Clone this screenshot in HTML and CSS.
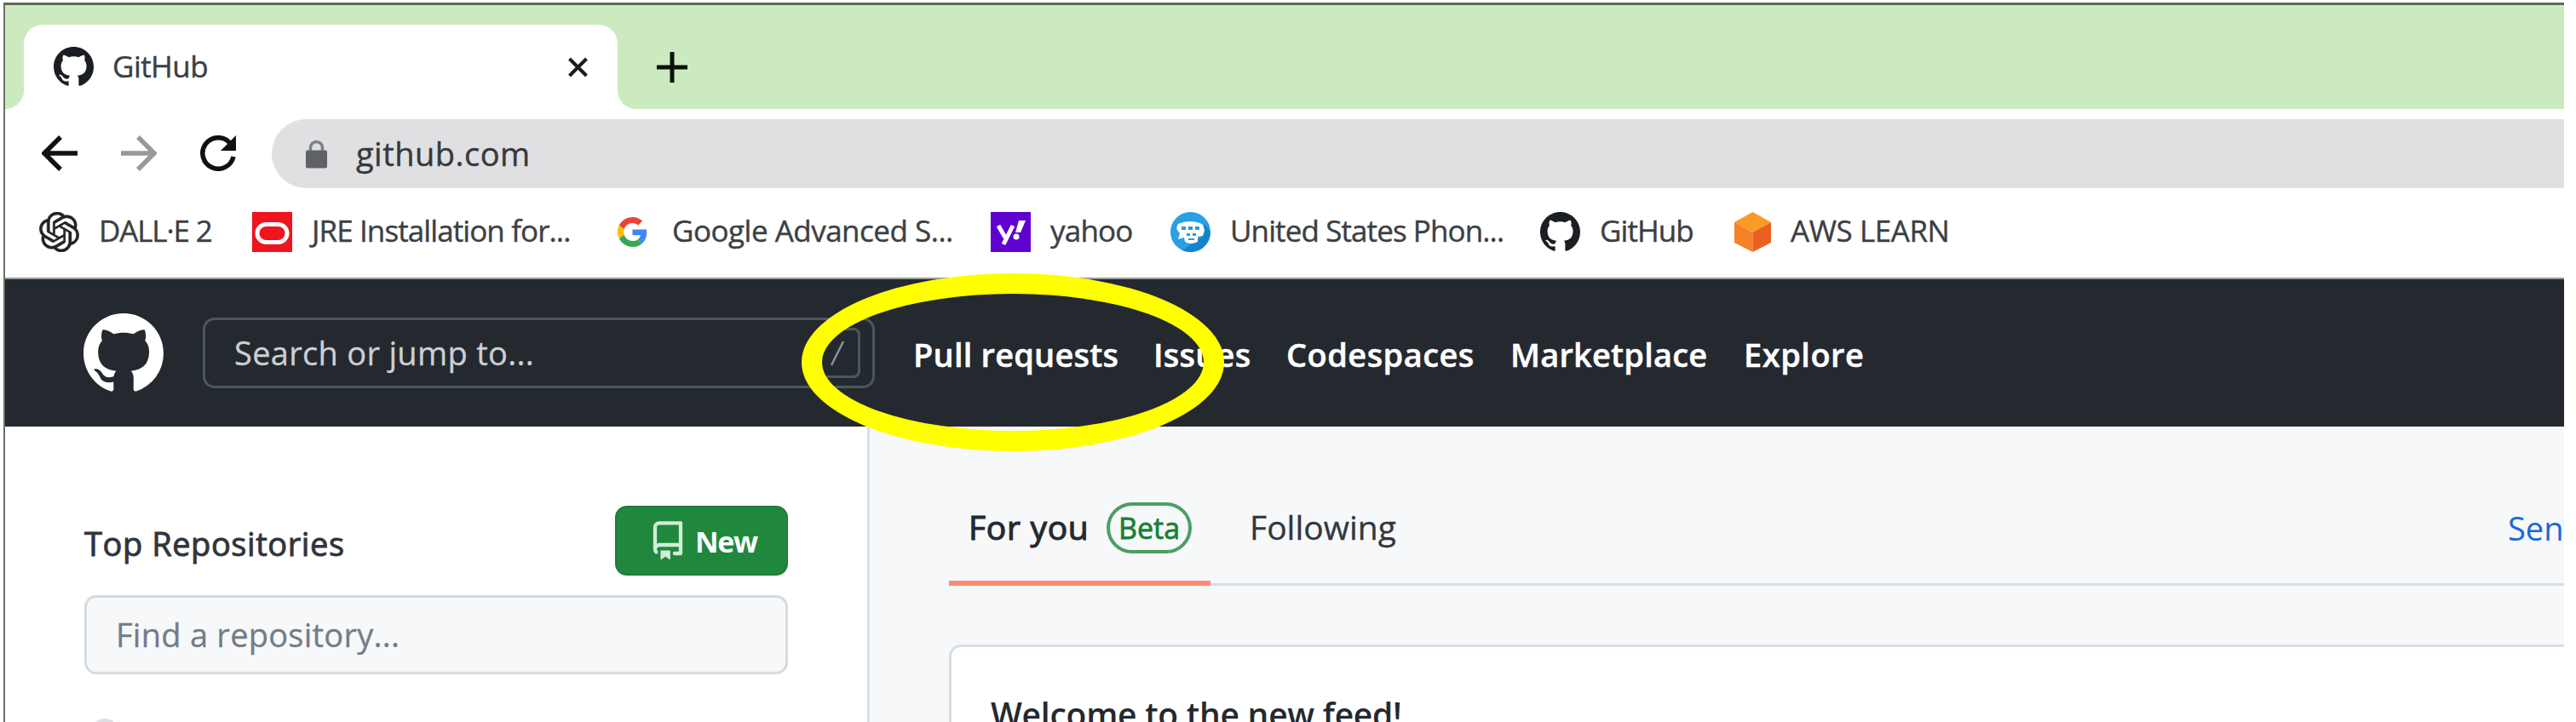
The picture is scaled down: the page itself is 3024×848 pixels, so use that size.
FILE: index.html
```html
<!DOCTYPE html>
<html lang="en">
<head>
<meta charset="utf-8">
<title>GitHub</title>
<link rel="stylesheet" href="styles.css">
</head>
<body>
<svg class="defs" width="0" height="0">
  <symbol id="mark" viewBox="0 0 16 16"><path d="M8 0C3.58 0 0 3.58 0 8c0 3.54 2.29 6.53 5.47 7.59.4.07.55-.17.55-.38 0-.19-.01-.82-.01-1.49-2.01.37-2.53-.49-2.69-.94-.09-.23-.48-.94-.82-1.13-.28-.15-.68-.52-.01-.53.63-.01 1.08.58 1.23.82.72 1.21 1.87.87 2.33.66.07-.52.28-.87.51-1.07-1.78-.2-3.64-.89-3.64-3.95 0-.87.31-1.59.82-2.15-.08-.2-.36-1.02.08-2.12 0 0 .67-.21 2.2.82.64-.18 1.32-.27 2-.27s1.36.09 2 .27c1.53-1.04 2.2-.82 2.2-.82.44 1.1.16 1.92.08 2.12.51.56.82 1.27.82 2.15 0 3.07-1.87 3.75-3.65 3.95.29.25.54.73.54 1.48 0 1.07-.01 1.93-.01 2.2 0 .21.15.46.55.38A8.01 8.01 0 0 0 16 8c0-4.42-3.58-8-8-8z"/></symbol>
</svg>
<div class="window">
  <div class="tabstrip">
    <div class="tab">
      <svg class="tab-icon"><use href="#mark"/></svg>
      <span class="tab-title">GitHub</span>
      <svg class="tab-close" viewBox="0 0 24 24"><path d="M2 2L22 22M22 2L2 22"/></svg>
    </div>
    <svg class="plus" viewBox="0 0 36 36"><path d="M18 0V36M0 18H36"/></svg>
  </div>
  <div class="toolbar">
    <svg class="nav-icon" viewBox="0 0 42 42"><path d="M42 21H4M22 2L3 21L22 40"/></svg>
    <svg class="nav-icon off" viewBox="0 0 42 42"><path d="M0 21H38M20 2L39 21L20 40"/></svg>
    <svg class="nav-icon" viewBox="0 0 42 42"><path d="M35 9A18.300 18.300 0 1 0 39 25"/><path class="solid" d="M42 0V18H24Z"/></svg>
    <div class="omnibox">
      <svg class="lock" viewBox="0 0 25 33"><path d="M5.500 14V9a7 7 0 0 1 14 0v5"/><rect y="12" width="25" height="21" rx="2"/></svg>
      <span class="url">github.com</span>
    </div>
  </div>
  <div class="bookmarks">
    <svg class="bm-icon" viewBox="0 0 24 24"><path fill="#222" stroke="#222" stroke-width=".3" d="M22.2819 9.8211a5.9847 5.9847 0 0 0-.5157-4.9108 6.0462 6.0462 0 0 0-6.5098-2.9A6.0651 6.0651 0 0 0 4.9807 4.1818a5.9847 5.9847 0 0 0-3.9977 2.9 6.0462 6.0462 0 0 0 .7427 7.0966 5.98 5.98 0 0 0 .511 4.9107 6.051 6.051 0 0 0 6.5146 2.9001A5.9847 5.9847 0 0 0 13.2599 24a6.0557 6.0557 0 0 0 5.7718-4.2058 5.9894 5.9894 0 0 0 3.9977-2.9001 6.0557 6.0557 0 0 0-.7475-7.0729zm-9.022 12.6081a4.4755 4.4755 0 0 1-2.8764-1.0408l.1419-.0804 4.7783-2.7582a.7948.7948 0 0 0 .3927-.6813v-6.7369l2.02 1.1686a.071.071 0 0 1 .038.052v5.5826a4.504 4.504 0 0 1-4.4945 4.4944zm-9.6607-4.1254a4.4708 4.4708 0 0 1-.5346-3.0137l.142.0852 4.783 2.7582a.7712.7712 0 0 0 .7806 0l5.8428-3.3685v2.3324a.0804.0804 0 0 1-.0332.0615L9.74 19.9502a4.4992 4.4992 0 0 1-6.1408-1.6464zM2.3408 7.8956a4.485 4.485 0 0 1 2.3655-1.9728V11.6a.7664.7664 0 0 0 .3879.6765l5.8144 3.3543-2.0201 1.1685a.0757.0757 0 0 1-.071 0l-4.8303-2.7865A4.504 4.504 0 0 1 2.3408 7.872zm16.5963 3.8558L13.1038 8.364 15.1192 7.2a.0757.0757 0 0 1 .071 0l4.8303 2.7913a4.4944 4.4944 0 0 1-.6765 8.1042v-5.6772a.79.79 0 0 0-.407-.667zm2.0107-3.0231l-.142-.0852-4.7735-2.7818a.7759.7759 0 0 0-.7854 0L9.409 9.2297V6.8974a.0662.0662 0 0 1 .0284-.0615l4.8303-2.7866a4.4992 4.4992 0 0 1 6.6802 4.66zM8.3065 12.863l-2.02-1.1638a.0804.0804 0 0 1-.038-.0567V6.0742a4.4992 4.4992 0 0 1 7.3757-3.4537l-.142.0805L8.704 5.459a.7948.7948 0 0 0-.3927.6813zm1.0976-2.3654l2.602-1.4998 2.6069 1.4998v2.9994l-2.5974 1.4997-2.6067-1.4997Z"/></svg>
    <span class="bm w-dalle">DALL·E 2</span>
    <svg class="bm-icon" viewBox="0 0 47 47"><rect width="47" height="47" fill="#f0141e"/><rect x="6" y="14.500" width="35" height="21" rx="10.500" fill="none" stroke="#fff" stroke-width="5"/></svg>
    <span class="bm w-jre">JRE Installation for...</span>
    <svg class="bm-icon google" viewBox="0 0 48 48"><path fill="#EA4335" d="M24 9.500c3.540 0 6.710 1.220 9.210 3.600l6.850-6.850C35.900 2.380 30.470 0 24 0 14.620 0 6.510 5.380 2.560 13.220l7.980 6.190C12.430 13.720 17.740 9.500 24 9.500z"/><path fill="#4285F4" d="M46.980 24.550c0-1.570-.15-3.090-.38-4.550H24v9.020h12.940c-.58 2.960-2.260 5.480-4.780 7.180l7.730 6c4.510-4.180 7.090-10.360 7.090-17.650z"/><path fill="#FBBC05" d="M10.530 28.590c-.48-1.450-.76-2.990-.76-4.590s.27-3.140.76-4.590l-7.980-6.190C.92 16.460 0 20.120 0 24c0 3.880.92 7.540 2.560 10.780l7.970-6.190z"/><path fill="#34A853" d="M24 48c6.480 0 11.930-2.130 15.890-5.810l-7.730-6c-2.150 1.450-4.920 2.300-8.160 2.300-6.260 0-11.570-4.220-13.470-9.910l-7.980 6.190C6.510 42.620 14.620 48 24 48z"/></svg>
    <span class="bm w-google">Google Advanced S...</span>
    <svg class="bm-icon" viewBox="0 0 47 47"><rect width="47" height="47" fill="#5f01d1"/><path d="M9 16L17 30M26 16L15 38" stroke="#fff" stroke-width="5" fill="none"/><path d="M33 10H41L35 24H29Z" fill="#fff"/><circle cx="30" cy="29" r="3.500" fill="#fff"/></svg>
    <span class="bm w-yahoo">yahoo</span>
    <svg class="bm-icon" viewBox="0 0 47 47"><circle cx="23.500" cy="23.500" r="23.500" fill="#29a0e2"/><path d="M47 23.500A23.500 23.500 0 0 1 14 45L36 30L40 14Z" fill="#1583c8"/><path d="M9 14q14-6 28 0q5 6 1 14l-6 1v6q-8 4-15 0l-1-5l-7 2l2-7q-6-5-2-11z" fill="#fff"/><path d="M13 17h5v4h-5zM21 17h5v4h-5zM29 17h5v4h-5zM19 25h4v3h-4zM26 25h4v3h-4zM21 31h7v2h-7z" fill="#299bdc"/></svg>
    <span class="bm w-phone">United States Phon...</span>
    <svg class="bm-icon dark"><use href="#mark"/></svg>
    <span class="bm w-github">GitHub</span>
    <svg class="bm-icon aws" viewBox="0 0 43 47"><path fill="#fb9a24" d="M21.500 0L43 12L21.500 24L0 12Z"/><path fill="#f58128" d="M0 12L21.500 24V47L0 36Z"/><path fill="#e9601f" d="M43 12L21.500 24V47L43 36Z"/></svg>
    <span class="bm w-aws">AWS LEARN</span>
  </div>
  <header class="header">
    <svg class="logo"><use href="#mark"/></svg>
    <div class="search">
      <span class="search-text">Search or jump to...</span>
      <span class="slash"><svg viewBox="0 0 18 30"><path d="M16 1L2 29"/></svg></span>
    </div>
    <nav class="nav">
      <a class="n-pull">Pull requests</a>
      <a class="n-issues">Issues</a>
      <a class="n-code">Codespaces</a>
      <a class="n-market">Marketplace</a>
      <a class="n-explore">Explore</a>
    </nav>
  </header>
  <div class="content">
    <aside class="sidebar">
      <div class="side-head">
        <h2 class="side-title">Top Repositories</h2>
        <button class="new"><svg viewBox="1.700 0 12.600 16"><path d="M2 2.500A2.500 2.500 0 0 1 4.500 0h8.750a.75.75 0 0 1 .75.75v12.500a.75.75 0 0 1-.75.75h-2.500a.75.75 0 0 1 0-1.500h1.750v-2h-8a1 1 0 0 0-.714 1.700.75.75 0 0 1-1.072 1.050A2.495 2.495 0 0 1 2 11.500Zm10.500-1h-8a1 1 0 0 0-1 1v6.708A2.486 2.486 0 0 1 4.500 9h8ZM5 12.250a.25.25 0 0 1 .25-.25h3.500a.25.25 0 0 1 .25.25v3.250a.25.25 0 0 1-.4.200l-1.450-1.087a.249.249 0 0 0-.3 0L5.400 15.700a.25.25 0 0 1-.4-.2Z"/></svg><span>New</span></button>
      </div>
      <div class="find"><span>Find a repository...</span></div>
      <div class="avatar"></div>
    </aside>
    <main class="main">
      <div class="tabs">
        <div class="feed-tab active"><span class="t-foryou">For you</span><span class="beta"><span>Beta</span></span></div>
        <div class="feed-tab following"><span>Following</span></div>
        <a class="feedback">Sen</a>
      </div>
      <div class="card"><span>Welcome to the new feed!</span></div>
    </main>
  </div>
</div>
<div class="ring"></div>
</body>
</html>
```
FILE: styles.css
```css
* { box-sizing: border-box; }
body { margin: 0; width: 3024px; height: 848px; overflow: hidden; background: #fff; font-family: "Open Sans", "Noto Sans", sans-serif; position: relative; }
svg { display: block; flex: none; }
.defs { position: absolute; }
.window { width: 3006px; height: 845px; margin: 3px 0 0 4px; border-left: 2px solid #6b6f68; border-top: 3px solid #5d6b58; overflow: hidden; }
span, a, h2 { white-space: nowrap; flex: none; }
.tabstrip { height: 122px; background: #cbeac0; padding: 23px 0 0 22px; display: flex; }
.tab { position: relative; width: 697px; height: 99px; background: #fff; border-radius: 22px 22px 0 0; display: flex; align-items: center; padding-left: 35px; }
.tab::before, .tab::after { content: ""; position: absolute; bottom: 0; width: 22px; height: 22px; }
.tab::before { left: -22px; background: radial-gradient(circle at 0 0, transparent 21.500px, #fff 22.500px); }
.tab::after { right: -22px; background: radial-gradient(circle at 100% 0, transparent 21.500px, #fff 22.500px); }
.tab-icon { width: 47px; height: 47px; fill: #1b1f24; }
.tab-title { font-size: 35px; letter-spacing: -.56px; color: #3c4043; width: 110px; margin: -3px 0 0 22px; -webkit-text-stroke: .4px; }
.tab-close { width: 25px; height: 24px; margin-left: 424px; fill: none; stroke: #1a1c1e; stroke-width: 4; }
.plus { width: 36px; height: 36px; margin: 32px 0 0 46px; fill: none; stroke: #0c0f0b; stroke-width: 5; }
.toolbar { height: 92px; padding: 12px 0 0 43px; display: flex; align-items: flex-start; }
.nav-icon { width: 42px; height: 42px; margin: 19px 51px 0 0; fill: none; stroke: #111; stroke-width: 5.500; }
.nav-icon .solid { fill: #111; stroke: none; }
.nav-icon.off { stroke: #97999b; }
.omnibox { margin-left: -9px; flex: 1; height: 81px; background: #e0e0e2; border-radius: 41px 0 0 41px; display: flex; align-items: center; padding-left: 40px; }
.lock { width: 25px; height: 34px; fill: #5f6368; }
.lock path { fill: none; stroke: #7d8084; stroke-width: 3.500; }
.url { font-size: 38px; letter-spacing: .48px; color: #36393d; margin: -1px 0 0 34px; -webkit-text-stroke: .4px; }
.bookmarks { height: 108px; border-bottom: 2px solid #97999c; display: flex; align-items: center; padding: 0 0 2px 40px; }
.bm-icon { width: 47px; height: 47px; }
.bm-icon.dark { fill: #1b1f24; }
.bm-icon.google { width: 35px; height: 35px; }
.bm-icon.aws { width: 43px; }
.bm { font-size: 35px; color: #3c4043; margin: -3px -2px 0 23px; -webkit-text-stroke: .4px; }
.w-dalle { width: 182px; letter-spacing: -1.150px; }
.w-jre { width: 361px; letter-spacing: -.9px; }
.w-google { width: 376px; margin-left: 29px; letter-spacing: -.5px; }
.w-yahoo { width: 143px; letter-spacing: -.8px; }
.w-phone { width: 366px; letter-spacing: -.9px; }
.w-github { width: 160px; letter-spacing: -.95px; }
.w-aws { width: 190px; letter-spacing: -.45px; }
.header { height: 173px; background: #24292f; display: flex; align-items: center; padding-left: 92px; }
.logo { width: 94px; height: 94px; fill: #fff; }
.search { width: 789px; height: 83px; margin-left: 46px; border: 3px solid #4d565f; border-radius: 14px; display: flex; align-items: center; justify-content: space-between; padding: 0 14px 0 34px; }
.search-text { font-size: 38px; letter-spacing: .3px; color: #ccd0d4; margin-top: -2px; -webkit-text-stroke: .3px; }
.slash { width: 54px; height: 59px; border: 3px solid #4d565f; border-radius: 8px; display: flex; align-items: center; justify-content: center; }
.slash svg { width: 18px; height: 30px; stroke: #8a9199; stroke-width: 2.500; }
.nav { display: flex; margin: 3px 0 0 45px; font-size: 38px; font-weight: 600; color: #fff; letter-spacing: .2px; -webkit-text-stroke: .5px; }
.n-pull { width: 282px; }
.n-issues { width: 156px; }
.n-code { width: 263px; letter-spacing: .45px; }
.n-market { width: 274px; }
.n-explore { letter-spacing: .5px; }
.content { display: flex; height: 347px; }
.sidebar { width: 1015px; border-right: 3px solid #d8dee4; padding: 93px 0 0 93px; }
.side-head { width: 826px; display: flex; justify-content: space-between; }
.side-title { margin: 18px 0 0; font-size: 38px; line-height: 52px; font-weight: 400; letter-spacing: .57px; color: #30353b; -webkit-text-stroke: .9px; }
.new { width: 203px; height: 82px; border: 2px solid #1f7a38; border-radius: 14px; background: #1f883d; color: #fff; font: 700 34px "Open Sans", sans-serif; letter-spacing: -1.400px; display: flex; align-items: center; padding: 0 0 0 42px; }
.new svg { width: 36px; height: 46px; fill: #d3ecd9; }
.new span { margin: 1px 0 0 14px; }
.find { width: 826px; height: 93px; margin-top: 23px; border: 3px solid #d5dbe2; border-radius: 14px; background: #f6f8fa; font-size: 38px; letter-spacing: .25px; color: #747c85; display: flex; align-items: center; padding: 0 0 2px 34px; -webkit-text-stroke: .3px; }
.avatar { width: 34px; height: 34px; border-radius: 50%; background: #dcdfe2; margin: 52px 0 0 7px; }
.main { flex: 1; min-width: 0; background: #f6f8fa; padding: 64px 0 0 93px; }
.tabs { height: 123px; border-bottom: 3px solid #d8dee4; display: flex; font-size: 39px; }
.feed-tab { height: 123px; padding: 0 0 17px 22px; display: flex; align-items: center; color: #32373d; }
.active { width: 307px; border-bottom: 6px solid #fd8c73; color: #24292f; padding: 0 0 8px 23px; }
.t-foryou { width: 162px; margin-top: -2px; letter-spacing: .7px; -webkit-text-stroke: 1.100px; }
.beta { width: 100px; height: 60px; border: 4px solid #4c9f62; border-radius: 30px; color: #1a7f37; font-size: 34px; display: flex; align-items: center; justify-content: center; -webkit-text-stroke: .8px; }
.following { padding-left: 46px; -webkit-text-stroke: .3px; }
.feedback { margin: 29px 0 0 auto; width: 66px; color: #1669da; font-size: 38px; }
.card { height: 200px; margin-top: 69px; border: 3px solid #d8dee4; border-right: 0; border-radius: 14px 0 0 0; background: #fff; font-size: 39px; font-weight: 600; letter-spacing: -.25px; color: #24292f; padding: 52px 0 0 46px; }
.ring { position: absolute; left: 941px; top: 321px; width: 496px; height: 209px; border: 24px solid #ff0; border-radius: 50%; }
```
